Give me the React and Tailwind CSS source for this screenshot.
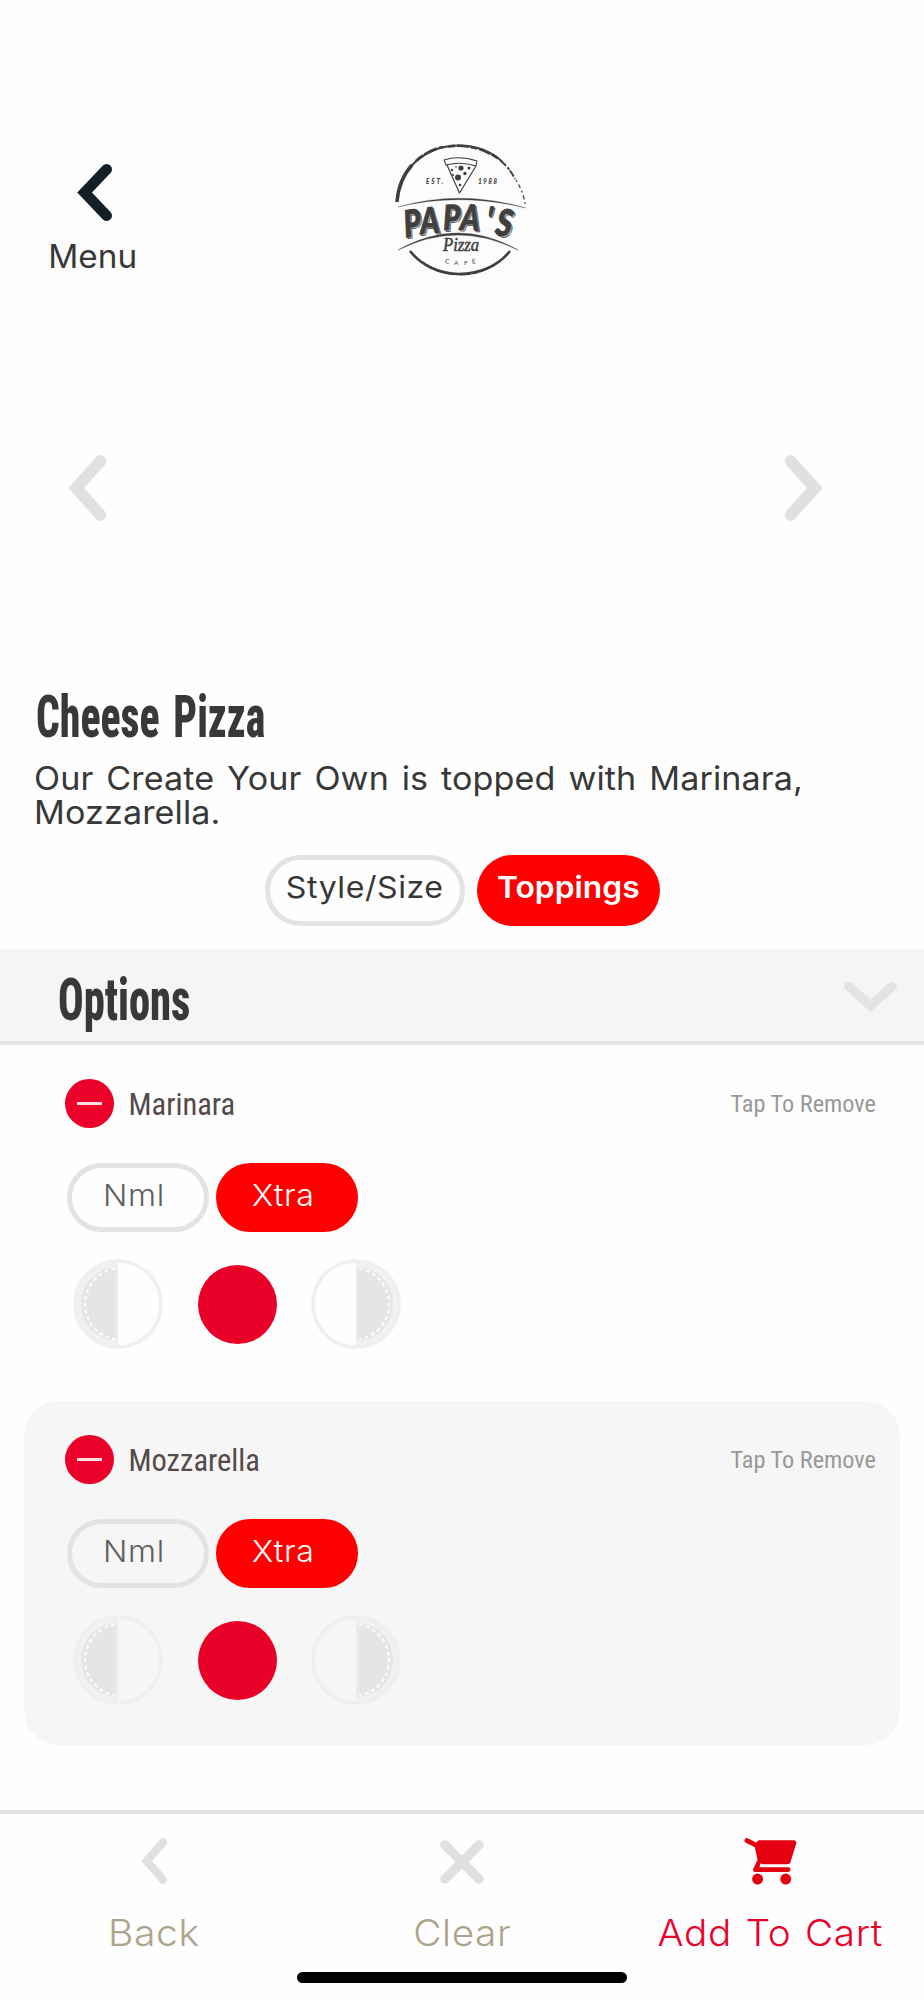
import React, { useState } from 'react';

const ChevronIcon = ({ className }) => (
  <svg viewBox="0 0 35.2 56.6" preserveAspectRatio="none" className={className} fill="none" stroke="currentColor">
    <path d="M29.9 5.3L7.6 28.3l22.3 23" strokeWidth="10.6" strokeLinecap="round" />
  </svg>
);

const ChevronDownIcon = ({ className }) => (
  <svg viewBox="0 0 56.6 35.2" preserveAspectRatio="none" className={className} fill="none" stroke="currentColor">
    <path d="M5.3 5.3l23 22.3 23-22.3" strokeWidth="10.6" strokeLinecap="round" />
  </svg>
);

const CloseIcon = ({ className }) => (
  <svg viewBox="0 0 44 44" className={className} fill="none" stroke="currentColor">
    <path d="M5 5l34 34M39 5L5 39" strokeWidth="9.5" strokeLinecap="round" />
  </svg>
);

const CartIcon = ({ className }) => (
  <svg viewBox="0 0 158 142" className={className} fill="currentColor">
    <path d="M8 8l30 15" stroke="currentColor" strokeWidth="15" strokeLinecap="round" />
    <path d="M43 7h107c5 0 8 4 7 9l-18 58c-1 3-4 5-8 5H55c-3 0-5-2-5-4l-4 11v2h86a7 7 0 0 1 0 15H35c-7 0-10-5-8-10l13-27-10-46z" />
    <circle cx="40" cy="124" r="16.5" />
    <circle cx="125" cy="124" r="16.5" />
  </svg>
);

const HalfIcon = ({ flip }) => (
  <svg viewBox="0 0 90 90" className={`h-[90px] w-[90px] ${flip ? '-scale-x-100' : ''}`} fill="none">
    <path d="M45 2a43 43 0 0 0 0 86z" fill="#f1f1f1" />
    <circle cx="45" cy="45" r="43" stroke="#efefef" strokeWidth="3.5" />
    <path d="M45 8a37 37 0 0 0 0 74z" fill="#e5e5e5" />
    <path d="M42 9.500a36 36 0 0 0 0 71" stroke="#fbfbfb" strokeWidth="2.200" strokeDasharray="4 3" />
    <path d="M43.500 8v74" stroke="#ebebeb" strokeWidth="3" />
  </svg>
);

const Logo = () => (
  <svg viewBox="2 0 160 160" className="h-[160px] w-[160px]" fill="none" stroke="#3f3f3f">
    {/* worn ring */}
    <path d="M17 72C19 38 46 15.500 79 15.500c18 0 32 6 43 16" strokeWidth="2.200" />
    <path d="M17 72c1-14 6-27 15-37" strokeWidth="3.400" />
    <path d="M36 31c8-7 17-12 27-14" strokeWidth="2.800" strokeDasharray="9 1.500 14 2" />
    <path d="M68 16.500c18-2.500 36 2 50 12" strokeWidth="2.600" strokeDasharray="7 2 12 1.500" />
    <path d="M121 31c7 6 11 12 14 18" strokeWidth="2" strokeDasharray="7 2 3 1" />
    <path d="M136 50c5 8 8 16 9 24" strokeWidth="1.300" strokeDasharray="2 3 4 3" />
    <path d="M30 121c11 14 29 23 49 23 22 0 40-9 51-23" strokeWidth="2.600" />
    <path d="M42 132c22 16 54 17 76 0" strokeWidth="2" strokeDasharray="11 2 6 1" />
    {/* banner curves */}
    <path d="M18 77q62-18 128 1Q80 62 18 77z" fill="#3f3f3f" strokeWidth=".3" />
    <path d="M18 120q60-34 120 0Q78 90 18 120z" fill="#3f3f3f" strokeWidth=".4" />
    {/* slice */}
    <path d="M64 30q15-5 33 1l-1 5q-15-5-30-1z" strokeWidth="1.100" strokeLinejoin="round" />
    <path d="M67 35l12.500 28L96 36" strokeWidth="1.200" strokeLinejoin="round" />
    <g fill="#3f3f3f" stroke="none">
      <circle cx="81" cy="38" r="2.600" />
      <circle cx="78" cy="47.500" r="3" />
      <circle cx="72" cy="40" r="1.200" />
      <circle cx="89" cy="38" r="1.500" />
      <circle cx="85" cy="43.500" r="1.700" />
      <circle cx="73" cy="45" r="1" />
      <circle cx="80" cy="55" r="1.300" />
      <circle cx="76" cy="37" r=".8" />
    </g>
    <g fill="#3f3f3f" stroke="none" fontFamily="Lato, sans-serif">
      <text x="46" y="54" fontSize="6.500" fontWeight="900" fontStyle="italic" textLength="17">EST.</text>
      <text x="98" y="54" fontSize="6.500" fontWeight="900" fontStyle="italic" textLength="19">1988</text>
      <text x="65" y="133.500" fontSize="6.500" transform="rotate(8 67 131)">C</text>
      <text x="74" y="135" fontSize="6.500">A</text>
      <text x="84" y="135" fontSize="6.500">F</text>
      <text x="92" y="133.500" fontSize="6.500" transform="rotate(-8 94 131)">E</text>
    </g>
    <text x="63" y="121" fontSize="18" fontFamily="'Liberation Serif', serif" fontStyle="italic" fill="#3f3f3f" strokeWidth=".5" textLength="36" lengthAdjust="spacingAndGlyphs">Pizza</text>
    {/* the name follows the upper curve */}
    <g fontFamily="Lato, sans-serif" fontWeight="900" fontStyle="italic" fontSize="35">
      <g fill="#bdbdbd" strokeWidth=".7">
        <text transform="translate(27 109) rotate(-8) scale(.84 1.06)">P</text>
        <text transform="translate(42.500 105.500) rotate(-5) scale(.84 1.02)">A</text>
        <text transform="translate(65 101.500) rotate(-2) scale(.84 .98)">P</text>
        <text transform="translate(81.500 101) rotate(3) scale(.84 1)">A</text>
        <text transform="translate(106 104) rotate(6) scale(.84 1.04)">'</text>
        <text transform="translate(116 106) rotate(9) scale(.88 1.06)">S</text>
      </g>
      <g fill="#3f3f3f" strokeWidth="1">
        <text transform="translate(25.500 107.500) rotate(-8) scale(.84 1.06)">P</text>
        <text transform="translate(41 104) rotate(-5) scale(.84 1.02)">A</text>
        <text transform="translate(63.500 100) rotate(-2) scale(.84 .98)">P</text>
        <text transform="translate(80 99.500) rotate(3) scale(.84 1)">A</text>
        <text transform="translate(105 102.500) rotate(6) scale(.84 1.04)">'</text>
        <text transform="translate(114.500 104.500) rotate(9) scale(.88 1.06)">S</text>
      </g>
    </g>
  </svg>
);

const AmountButton = ({ label, active, onClick }) => (
  <button
    onClick={onClick}
    className={`flex h-[69px] w-[142px] justify-center rounded-full border-[5px] pr-2 pt-[11px] text-[30px] font-[350] leading-[32px] tracking-[0.600px] ${
      active ? 'border-[#ff0000] bg-[#ff0000] text-white' : 'border-[#e3e3e3] text-[#606060]'
    }`}
  >
    <span className="scale-x-[1.07]">{label}</span>
  </button>
);

const Topping = ({ name, shaded }) => {
  const [amount, setAmount] = useState('Xtra');

  return (
    <li className={`mx-6 h-[344px] rounded-[35px] pl-[41px] pr-6 pt-[34px] ${shaded ? 'bg-[#f6f6f6]' : ''}`}>
      <div className="flex h-[49px] items-center font-[Roboto,sans-serif] [font-stretch:75%]">
        <button className="flex h-[48.500px] w-[48.500px] items-center justify-center rounded-full bg-[#eb0029]">
          <span className="h-[3px] w-[25px] bg-[#ffe0e0]"></span>
        </button>
        <span className="ml-[15px] mt-0.5 text-[30.500px] text-[#544a4a]">{name}</span>
        <span className="ml-auto mt-0.5 text-[24.300px] text-[#999]">Tap To Remove</span>
      </div>
      <div className="ml-0.5 mt-[35px] flex gap-[7px]">
        {['Nml', 'Xtra'].map((label) => (
          <AmountButton key={label} label={label} active={amount === label} onClick={() => setAmount(label)} />
        ))}
      </div>
      <div className="ml-2 mt-[27px] flex items-center">
        <HalfIcon />
        <span className="mx-[34.500px] h-[79px] w-[79px] rounded-full bg-[#e90028]"></span>
        <HalfIcon flip />
      </div>
    </li>
  );
};

export default function App() {
  return (
    <div className="flex h-[2000px] w-[924px] flex-col overflow-hidden bg-[#fefefe] font-[Inter,sans-serif] text-[#383838]">
      <header className="grid h-[300px] shrink-0 grid-cols-[185px_1fr_185px] bg-[#fcfcfc]">
        <button className="flex flex-col items-center pt-[163.500px]">
          <ChevronIcon className="ml-1 h-[57px] w-[35px] text-[#131f27]" />
          <span className="mt-5 scale-x-[1.04] text-[32px] font-[380] leading-[32px]">Menu</span>
        </button>
        <div className="flex justify-center pt-[130px]">
          <Logo />
        </div>
      </header>

      <section className="flex h-[376px] shrink-0 justify-between pl-[68px] pr-[101px] pt-[154.500px] text-[#e1e0de]">
        <ChevronIcon className="h-[66px] w-[38px]" />
        <ChevronIcon className="h-[66px] w-[38px] -scale-x-100" />
      </section>

      <section className="h-[273px] shrink-0 pl-[34px]">
        <h1 className="ml-0.5 h-[86px] w-max origin-left scale-x-[0.695] pt-[11px] font-[Roboto,sans-serif] text-[60px] font-extrabold leading-[60px] [font-stretch:75%] [word-spacing:6px]">
          Cheese Pizza
        </h1>
        <p className="w-[800px] origin-left scale-x-[1.05] text-[32.500px] font-[380] leading-[33.500px] tracking-[0.100px] [word-spacing:3px]">
          Our Create Your Own is topped with Marinara, Mozzarella.
        </p>
        <div className="-ml-[34px] mt-[26px] flex justify-center gap-3 text-[30px] leading-[32px]">
          <button className="flex h-[71px] w-[200px] justify-center rounded-full border-[5px] border-[#e3e3e3] pt-[11px] font-[380] tracking-[0.500px]">
            <span className="scale-x-[1.07]">Style/Size</span>
          </button>
          <button className="flex h-[71px] w-[183px] justify-center rounded-full bg-[#ff0000] pt-[16px] font-semibold text-white">
            <span className="scale-x-[1.06]">Toppings</span>
          </button>
        </div>
      </section>

      <section className="flex h-24 shrink-0 items-center justify-between border-b-4 border-[#e3e3e3] bg-[#f5f5f5] pl-[58px] pr-[27px]">
        <h2 className="origin-left scale-x-[0.71] pt-2.5 font-[Roboto,sans-serif] text-[60px] font-extrabold leading-[60px] [font-stretch:75%]">Options</h2>
        <ChevronDownIcon className="mt-1 h-[30px] w-[53px] text-[#e3e3e3]" />
      </section>

      <ul className="flex flex-1 flex-col gap-3">
        <Topping name="Marinara" />
        <Topping name="Mozzarella" shaded />
      </ul>

      <nav className="relative flex h-[190px] shrink-0 border-t-4 border-[#e3e3e3] text-[36.500px] font-[350] leading-[36px] tracking-[0.600px] text-[#ada58b]">
        <button className="flex flex-1 flex-col items-center pt-[24px]">
          <ChevronIcon className="h-[46px] w-[26px] text-[#e1e0de]" />
          <span className="mt-[31px] scale-x-[1.07]">Back</span>
        </button>
        <button className="flex flex-1 flex-col items-center pt-[26px]">
          <CloseIcon className="h-[44px] w-[44px] text-[#e1e0de]" />
          <span className="mt-[31px] scale-x-[1.06]">Clear</span>
        </button>
        <button className="flex flex-1 flex-col items-center pt-[24px] text-[#eb0029]">
          <CartIcon className="h-[47px] w-[53px] text-[#e4000f]" />
          <span className="mt-[30px] scale-x-[1.06] [word-spacing:2px]">Add To Cart</span>
        </button>
        {/* home indicator sits over the tab bar */}
        <span className="absolute bottom-[17.500px] left-[297px] h-[11px] w-[330px] rounded-full bg-black"></span>
      </nav>
    </div>
  );
}
